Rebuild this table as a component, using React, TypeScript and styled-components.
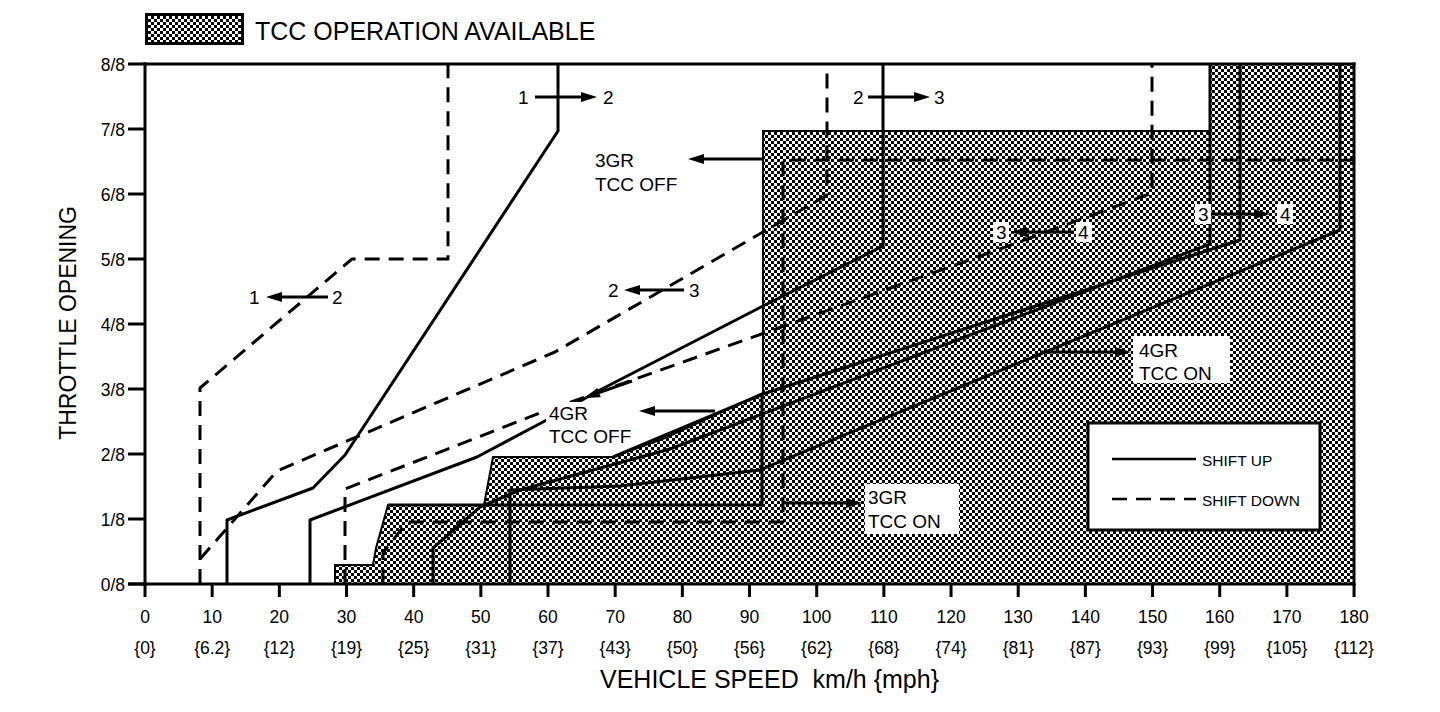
import React from "react";
import styled, { createGlobalStyle } from "styled-components";

const GlobalStyle = createGlobalStyle`
  html, body { margin: 0; padding: 0; background: #fff; }
  body { font-family: "Liberation Sans", Arial, sans-serif; color: #000; }
`;

const Page = styled.div`
  width: 1440px;
  height: 712px;
  display: flex;
  flex-direction: column;
  background: #fff;
  overflow: hidden;
`;

const Header = styled.div`
  display: flex;
  align-items: flex-start;
  gap: 11px;
  height: 55px;
  box-sizing: border-box;
  padding: 13px 0 0 145px;
`;

const Swatch = styled.div`
  width: 99px;
  height: 32px;
  box-sizing: border-box;
  border: 3px solid #000;
  background-color: #fff;
  background-image: repeating-conic-gradient(#000 0 25%, #fff 0 50%);
  background-size: 6px 6px;
`;

const Title = styled.div`
  margin-top: 4px;
  font-size: 25px;
  line-height: 28px;
  white-space: nowrap;
`;

const ChartRow = styled.div`
  display: flex;
  height: 605px;
`;

const YTitleBox = styled.div`
  width: 90px;
  box-sizing: border-box;
  padding: 0 0 70px 46px;
  display: flex;
  align-items: center;
  justify-content: center;
`;

const YTitle = styled.span`
  writing-mode: vertical-rl;
  transform: rotate(180deg);
  font-size: 23px;
  line-height: 1;
  white-space: nowrap;
`;

const Plot = styled.svg`
  display: block;
  width: 1350px;
  height: 605px;
`;

const XTitle = styled.div`
  margin: 5px 0 0 600px;
  font-size: 25px;
  line-height: 28px;
  white-space: pre;
`;

const Curve = styled.polyline<{ $dashed?: boolean; $w?: number }>`
  fill: none;
  stroke: #000;
  stroke-width: ${(p) => p.$w ?? 3}px;
  stroke-dasharray: ${(p) => (p.$dashed ? "15 9" : "none")};
  stroke-linejoin: round;
`;

const Shade = styled.polygon`
  fill: url(#tcc);
  stroke: #000;
  stroke-width: 2px;
`;

const Frame = styled.line<{ $w?: number }>`
  stroke: #000;
  stroke-width: ${(p) => p.$w ?? 3}px;
`;

const Blank = styled.rect`
  fill: #fff;
`;

const LegendBox = styled.rect`
  fill: #fff;
  stroke: #000;
  stroke-width: 3px;
`;

const TickText = styled.text<{ $anchor?: string }>`
  font-family: "Liberation Sans", Arial, sans-serif;
  font-size: 17.5px;
  text-anchor: ${(p) => p.$anchor ?? "middle"};
  fill: #000;
`;

const Note = styled.text`
  font-family: "Liberation Sans", Arial, sans-serif;
  font-size: 19px;
  fill: #000;
`;

const LegendText = styled.text`
  font-family: "Liberation Sans", Arial, sans-serif;
  font-size: 15.5px;
  fill: #000;
`;

const Head = styled.polygon`
  fill: #000;
`;

const X = (v: number) => 145 + v * 6.717;
const Y = (e: number) => 584 - e * 65;

const mph = ["0", "6.2", "12", "19", "25", "31", "37", "43", "50", "56", "62", "68", "74", "81", "87", "93", "99", "105", "112"];

type ArrowProps = { x1: number; y1: number; x2: number; y2: number };
const Arrow = ({ x1, y1, x2, y2 }: ArrowProps) => {
  const a = Math.atan2(y2 - y1, x2 - x1);
  const len = 16;
  const hw = 5;
  const bx = x2 - len * Math.cos(a);
  const by = y2 - len * Math.sin(a);
  const px = -Math.sin(a) * hw;
  const py = Math.cos(a) * hw;
  return (
    <g>
      <Curve points={`${x1},${y1} ${bx},${by}`} $w={3} />
      <Head points={`${x2},${y2} ${bx + px},${by + py} ${bx - px},${by - py}`} />
    </g>
  );
};

const pts = (a: number[][]) => a.map((p) => p.join(",")).join(" ");

export default function App() {
  return (
    <Page>
      <GlobalStyle />
      <Header>
        <Swatch />
        <Title>TCC OPERATION AVAILABLE</Title>
      </Header>
      <ChartRow>
        <YTitleBox>
          <YTitle>THROTTLE OPENING</YTitle>
        </YTitleBox>
        <Plot viewBox="90 55 1350 605">
          <defs>
            <pattern id="tcc" patternUnits="userSpaceOnUse" width="6" height="6">
              <rect x="0" y="0" width="6" height="6" fill="#fff" />
              <rect x="0" y="0" width="3" height="3" fill="#000" />
              <rect x="3" y="3" width="3" height="3" fill="#000" />
            </pattern>
          </defs>

          <Shade points="335,584 335,565 373,565 376,548 388,505 484,505 493,457 613,457 665,438 763,393 763,131 1210,131 1210,64 1354,64 1354,584" />

          {/* upshift lines */}
          <Curve points={pts([[227, 584], [227, 520], [313, 488], [345, 455], [558, 131], [558, 64]])} />
          <Curve points={pts([[310, 584], [310, 520], [477, 457], [543, 422], [600, 390], [763, 306], [883, 246], [883, 64]])} />
          <Curve points={pts([[433, 584], [433, 548], [480, 507], [520, 490], [670, 449], [1210, 244], [1210, 64]])} />
          <Curve points={pts([[1240, 64], [1240, 240], [763, 394], [613, 457]])} />
          <Curve points={pts([[510, 584], [510, 490], [620, 486], [760, 470], [1340, 230], [1340, 64]])} />
          <Curve points={pts([[388, 505], [762, 505], [762, 393]])} />

          {/* downshift lines */}
          <Curve $dashed points={pts([[200, 584], [200, 388], [352, 259], [448, 259], [448, 64]])} />
          <Curve $dashed points={pts([[200, 559], [277, 471], [555, 352], [827, 195], [827, 64]])} />
          <Curve $dashed points={pts([[345, 584], [345, 489], [540, 413], [1000, 249], [1152, 193], [1152, 64]])} />
          <Curve $dashed points={pts([[383, 584], [383, 553], [407, 522], [783, 522], [783, 160], [1354, 160]])} />

          {/* label backgrounds */}
          <Blank x={546} y={402} width={74} height={44} />
          <Blank x={865} y={484} width={94} height={50} />
          <Blank x={1133} y={336} width={97} height={47} />
          <Blank x={993} y={222} width={16} height={20} />
          <Blank x={1076} y={222} width={16} height={20} />
          <Blank x={1195} y={204} width={16} height={20} />
          <Blank x={1277} y={204} width={16} height={20} />

          {/* shift arrows */}
          <Note x={518} y={104}>1</Note>
          <Arrow x1={535} y1={97} x2={597} y2={97} />
          <Note x={603} y={104}>2</Note>

          <Note x={853} y={104}>2</Note>
          <Arrow x1={868} y1={97} x2={930} y2={97} />
          <Note x={934} y={104}>3</Note>

          <Note x={249} y={304}>1</Note>
          <Arrow x1={328} y1={297} x2={266} y2={297} />
          <Note x={332} y={304}>2</Note>

          <Note x={608} y={297}>2</Note>
          <Arrow x1={684} y1={290} x2={624} y2={290} />
          <Note x={689} y={297}>3</Note>

          <Note x={996} y={239}>3</Note>
          <Arrow x1={1074} y1={232} x2={1011} y2={232} />
          <Note x={1078} y={239}>4</Note>

          <Note x={1198} y={221}>3</Note>
          <Arrow x1={1212} y1={214} x2={1270} y2={214} />
          <Note x={1280} y={221}>4</Note>

          {/* region labels */}
          <Note x={595} y={167}>3GR</Note>
          <Note x={595} y={191}>TCC OFF</Note>
          <Arrow x1={762} y1={159} x2={688} y2={159} />

          <Note x={549} y={420}>4GR</Note>
          <Note x={549} y={443}>TCC OFF</Note>
          <Arrow x1={715} y1={411} x2={639} y2={411} />
          <Arrow x1={632} y1={381} x2={584} y2={398} />

          <Note x={868} y={504}>3GR</Note>
          <Note x={868} y={528}>TCC ON</Note>
          <Arrow x1={785} y1={503} x2={862} y2={503} />

          <Note x={1139} y={357}>4GR</Note>
          <Note x={1139} y={380}>TCC ON</Note>
          <Arrow x1={1040} y1={352} x2={1131} y2={352} />

          {/* legend */}
          <LegendBox x={1088} y={423} width={232} height={107} />
          <Curve points="1112,459 1196,459" $w={2.5} />
          <LegendText x={1202} y={466}>SHIFT UP</LegendText>
          <Curve points="1112,499 1196,499" $w={2.5} $dashed />
          <LegendText x={1202} y={506}>SHIFT DOWN</LegendText>

          {/* frame and axes */}
          <Frame x1={145} y1={62.5} x2={145} y2={585.5} $w={3} />
          <Frame x1={143.5} y1={64} x2={1355.5} y2={64} $w={3} />
          <Frame x1={1354} y1={62.5} x2={1354} y2={585.5} $w={3} />
          <Frame x1={128} y1={584} x2={1355.5} y2={584} $w={3} />

          {Array.from({ length: 9 }, (_, i) => (
            <g key={`y${i}`}>
              <Frame x1={128} y1={Y(i)} x2={145} y2={Y(i)} $w={3} />
              <TickText x={125} y={Y(i) + 6.5} $anchor="end">{`${i}/8`}</TickText>
            </g>
          ))}

          {Array.from({ length: 19 }, (_, i) => (
            <g key={`x${i}`}>
              <Frame x1={X(i * 10)} y1={584} x2={X(i * 10)} y2={597} $w={3} />
              <TickText x={X(i * 10)} y={623}>{`${i * 10}`}</TickText>
              <TickText x={X(i * 10)} y={654}>{`{${mph[i]}}`}</TickText>
            </g>
          ))}
        </Plot>
      </ChartRow>
      <XTitle>{"VEHICLE SPEED  km/h {mph}"}</XTitle>
    </Page>
  );
}
